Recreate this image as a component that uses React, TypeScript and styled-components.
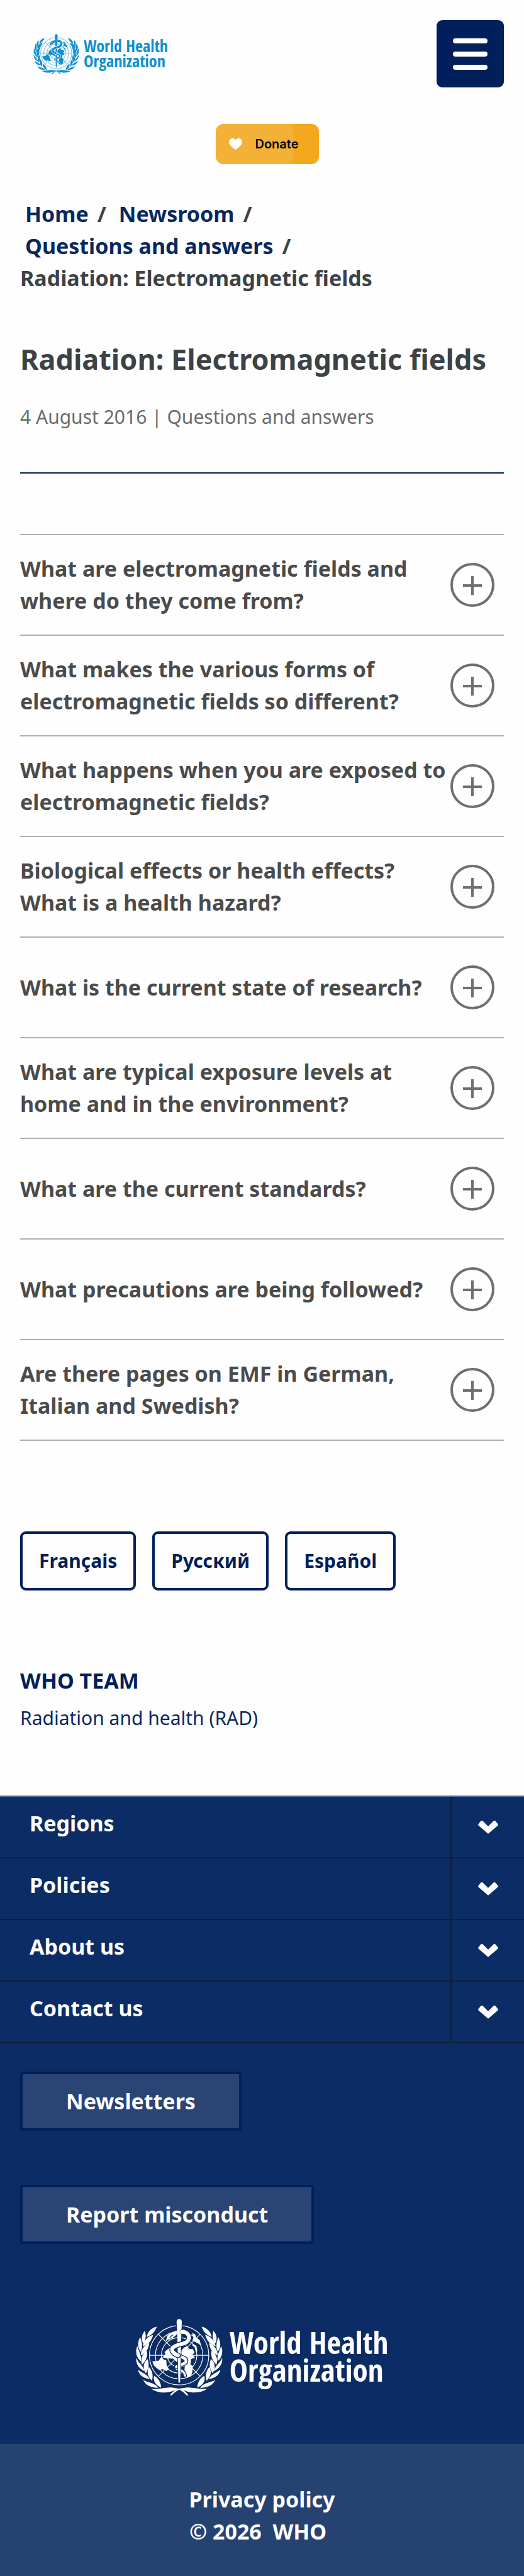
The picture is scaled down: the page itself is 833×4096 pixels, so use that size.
import React, { useState } from "react";
import styled, { createGlobalStyle, css } from "styled-components";

const navy = "#001f5b";
const deep = "#0c2c65";

const GlobalStyle = createGlobalStyle`
  *, *::before, *::after { box-sizing: border-box; }
  body {
    margin: 0;
    background: #fefefe;
    color: #3c4245;
    font-family: "Noto Sans", "Open Sans", sans-serif;
    font-size: 34px;
    line-height: 51px;
  }
  button { font: inherit; color: inherit; cursor: pointer; }
  a { color: inherit; text-decoration: none; }
`;

/* ---------- logo ---------- */

const LogoLink = styled.a<{ $large?: boolean }>`
  display: inline-flex;
  align-items: center;
  gap: ${(p) => (p.$large ? 11 : 7)}px;
  color: ${(p) => (p.$large ? "#fff" : "#0d90d1")};
  svg {
    width: ${(p) => (p.$large ? 138 : 73)}px;
    height: ${(p) => (p.$large ? 122 : 64)}px;
    flex: none;
  }
`;

const Wordmark = styled.span<{ $large?: boolean }>`
  font-family: "Open Sans Condensed", "Roboto Condensed", sans-serif;
  font-weight: 700;
  white-space: nowrap;
  ${(p) =>
    p.$large
      ? css`
          padding-bottom: 4px;
          font-size: 49px;
          line-height: 44px;
        `
      : css`
          padding-bottom: 2px;
          font-size: 26px;
          line-height: 24px;
        `}
  span {
    display: block;
  }
`;

const leaves = [
  "M158 75C126 82 98 104 90 144C124 132 146 112 158 75Z",
  "M79 102C54 130 52 160 68 190C86 162 86 130 79 102Z",
  "M134 130C100 140 70 165 64 207C96 198 122 175 134 130Z",
  "M46 145C28 180 28 212 50 244C66 208 58 175 46 145Z",
  "M108 183C76 200 48 228 51 268C86 250 102 226 108 183Z",
  "M27 205C12 245 20 278 51 308C57 268 38 240 27 205Z",
  "M92 236C64 255 46 288 58 330C86 306 98 272 92 236Z",
  "M20 284C17 325 35 354 76 374C68 338 36 322 20 284Z",
  "M96 292C70 312 60 347 84 388C106 354 108 325 96 292Z",
  "M32 364C40 402 66 418 110 428C94 392 60 387 32 364Z",
  "M105 345C90 375 94 407 125 438C137 402 127 370 105 345Z",
  "M66 433C84 470 120 486 168 485C142 450 100 452 66 433Z",
  "M140 404C131 440 150 467 187 484C186 446 166 420 140 404Z",
  "M120 492C165 500 212 480 262 484C288 486 300 489 309 494C280 497 262 515 215 517C174 518 144 509 120 492Z",
  "M304 490C280 500 260 516 246 536L259 536C272 520 290 506 313 496Z",
];

const Emblem = ({ bg }: { bg: string }) => {
  const branch = leaves.map((d) => <path key={d} d={d} />);
  return (
    <svg viewBox="18 22 582 515" fill="currentColor" aria-hidden="true">
      <g>{branch}</g>
      <g transform="translate(617 0) scale(-1 1)">{branch}</g>
      <g fill="none" stroke="currentColor" strokeWidth="5">
        <circle cx="308" cy="267" r="199" />
        <circle cx="308" cy="267" r="159" />
        <circle cx="308" cy="267" r="119" />
        <circle cx="308" cy="267" r="79" />
        <path d="M108 267H508M169 126L449 408M449 126L169 408" />
      </g>
      <path d="M218 172L230 134L262 112L330 90L346 92L290 118L288 132L262 152L232 162Z" />
      <path d="M394 118L414 124L424 148L446 166L455 200L432 186L412 176L398 170L404 146Z" />
      <path d="M402 190L424 205L430 238L420 248L414 214L396 200Z" />
      <path d="M322 236L342 214L366 208L372 228L400 224L412 250L398 262L414 284L388 292L384 330L400 340L396 384L386 408L352 418L342 388L346 340L360 318L350 290L322 276Z" />
      <path d="M196 282L216 258L210 246L232 226L252 214L262 240L276 262L304 292L292 312L268 290L236 288Z" />
      <path d="M128 308L170 304L188 278L206 296L222 300L224 334L240 362L222 372L196 360L174 366L152 348L138 334Z" />
      <g fill="none" strokeLinecap="round">
        <path d="M348 404C344 372 318 364 298 362C278 354 288 334 312 330" stroke={bg} strokeWidth="24" />
        <path d="M348 404C344 372 318 364 298 362C278 354 288 334 312 330" stroke="currentColor" strokeWidth="14" />
        <path d="M290 344C312 330 350 328 354 308C360 284 320 280 292 264" stroke={bg} strokeWidth="30" />
        <path d="M290 344C312 330 350 328 354 308C360 284 320 280 292 264" stroke="currentColor" strokeWidth="19" />
      </g>
      <path
        d="M291 44C289 18 328 18 326 44L321 180L315 446Q309 458 303 446L297 180Z"
        stroke={bg}
        strokeWidth="8"
        paintOrder="stroke"
      />
      <g fill="none" strokeLinecap="round">
        <path d="M330 110C366 110 384 142 368 168C350 198 296 186 266 216C250 236 272 256 300 268" stroke={bg} strokeWidth="36" />
        <path d="M326 110C366 108 384 142 368 168C350 198 296 186 266 216C250 236 272 256 300 268" stroke="currentColor" strokeWidth="25" />
        <path d="M240 150C252 128 272 120 290 116" stroke="currentColor" strokeWidth="22" />
        <path d="M246 148C256 136 262 132 266 131" stroke={bg} strokeWidth="5" />
      </g>
    </svg>
  );
};

const Logo = ({ large, bg }: { large?: boolean; bg: string }) => (
  <LogoLink href="#" $large={large} aria-label="World Health Organization">
    <Emblem bg={bg} />
    <Wordmark $large={large}>
      <span>World Health</span>
      <span>Organization</span>
    </Wordmark>
  </LogoLink>
);

/* ---------- header ---------- */

const Header = styled.header`
  display: flex;
  align-items: center;
  justify-content: space-between;
  padding: 32px 32px 0 53px;
`;

const MenuButton = styled.button`
  display: flex;
  flex-direction: column;
  align-items: center;
  justify-content: center;
  gap: 13px;
  width: 107px;
  height: 107px;
  padding: 0;
  border: 0;
  border-radius: 9px;
  background: ${navy};
  span {
    width: 55px;
    height: 8px;
    border-radius: 4px;
    background: #fff;
  }
`;

const DonateRow = styled.div`
  display: flex;
  justify-content: center;
  padding: 58px 0 54px 16px;
`;

const DonateLink = styled.a`
  display: flex;
  align-items: center;
  gap: 21px;
  width: 164px;
  height: 64px;
  padding-left: 21px;
  border-radius: 12px;
  background: radial-gradient(circle at -140px 32px, #f3b138 263px, #f3a81d 264px);
  color: #000;
  font-family: Inter, sans-serif;
  font-size: 20px;
  font-weight: 600;
  line-height: 28px;
`;

/* ---------- main ---------- */

const Main = styled.main`
  padding: 0 32px 101px;
`;

const Crumbs = styled.ol`
  display: flex;
  flex-wrap: wrap;
  column-gap: 12px;
  margin: 0;
  padding: 0;
  list-style: none;
  font-weight: 700;
`;

const Crumb = styled.li`
  white-space: nowrap;
  a {
    padding: 0 14px 0 8px;
    color: #08285f;
  }
`;

const Title = styled.h1`
  margin: 73px 0 40px;
  font-size: 45px;
  line-height: 60px;
  font-weight: 700;
`;

const Meta = styled.p`
  margin: 0;
  padding-bottom: 66px;
  border-bottom: 2px solid ${navy};
  color: #6b6b6b;
  font-size: 30px;
  line-height: 44px;
`;

const Questions = styled.section`
  margin-top: 96px;
  border-top: 2px solid #b0b0b0;
`;

const Question = styled.button`
  display: flex;
  align-items: center;
  justify-content: space-between;
  width: 100%;
  min-height: 160px;
  padding: 0 15px 0 0;
  border: 0;
  border-bottom: 2px solid #b0b0b0;
  background: none;
  color: #4b4b4b;
  font-weight: 700;
  text-align: left;
  span {
    flex: 1;
  }
  svg {
    flex: none;
    width: 70px;
    height: 70px;
  }
`;

const Languages = styled.nav`
  display: flex;
  flex-wrap: wrap;
  gap: 26px;
  margin-top: 144px;
`;

const Language = styled.a`
  padding: 21px 26px;
  border: 4px solid ${navy};
  border-radius: 9px;
  color: ${navy};
  font-size: 30px;
  line-height: 44px;
  font-weight: 700;
`;

const TeamTitle = styled.h2`
  margin: 118px 0 12px;
  color: ${navy};
  font-size: 34px;
  line-height: 51px;
  font-weight: 700;
`;

const TeamLink = styled.a`
  display: block;
  color: #08285f;
  font-size: 30px;
  line-height: 44px;
`;

/* ---------- footer ---------- */

const Footer = styled.footer`
  border-top: 2px solid #526f9a;
  background: ${deep};
  color: #fff;
  font-weight: 700;
`;

const FooterRow = styled.div`
  display: flex;
  height: 98px;
  border-bottom: 2px solid #101f33;
  a {
    flex: 1;
    padding: 17px 0 0 47px;
  }
`;

const Expand = styled.button`
  display: flex;
  align-items: center;
  justify-content: center;
  width: 117px;
  padding: 0;
  border: 0;
  border-left: 2px solid #101f33;
  background: none;
`;

const Actions = styled.div`
  display: flex;
  flex-direction: column;
  align-items: flex-start;
  gap: 86px;
  padding: 45px 32px 119px;
`;

const Action = styled.a`
  padding: 18px 69px 17px;
  border: 4px solid ${navy};
  border-radius: 4px;
  background: #2a4476;
`;

const FooterLogo = styled.div`
  display: flex;
  justify-content: center;
  padding-bottom: 77px;
`;

const Legal = styled.div`
  display: flex;
  flex-direction: column;
  align-items: center;
  padding: 63px 0 45px;
  background: #264271;
  small {
    padding-right: 4px;
    font-size: inherit;
    white-space: pre;
  }
`;

const questions = [
  "What are electromagnetic fields and where do they come from?",
  "What makes the various forms of electromagnetic fields so different?",
  "What happens when you are exposed to electromagnetic fields?",
  "Biological effects or health effects? What is a health hazard?",
  "What is the current state of research?",
  "What are typical exposure levels at home and in the environment?",
  "What are the current standards?",
  "What precautions are being followed?",
  "Are there pages on EMF in German, Italian and Swedish?",
];

const trail = ["Home", "Newsroom", "Questions and answers"];
const languages = ["Français", "Русский", "Español"];
const sections = ["Regions", "Policies", "About us", "Contact us"];

export default function App() {
  const [open, setOpen] = useState<string | null>(null);
  const toggle = (id: string) => setOpen(open === id ? null : id);

  return (
    <>
      <GlobalStyle />
      <Header>
        <Logo bg="#fefefe" />
        <MenuButton type="button" aria-label="Menu">
          <span />
          <span />
          <span />
        </MenuButton>
      </Header>
      <DonateRow>
        <DonateLink href="#">
          <svg width="21" height="18" viewBox="0 0 30 26" fill="#fff" aria-hidden="true">
            <path d="M15 26C6 20 0 15 0 8C0 3 4 0 8 0C11 0 14 2 15 4C16 2 19 0 22 0C26 0 30 3 30 8C30 15 24 20 15 26Z" />
          </svg>
          Donate
        </DonateLink>
      </DonateRow>

      <Main>
        <nav aria-label="Breadcrumb">
          <Crumbs>
            {trail.map((t) => (
              <Crumb key={t}>
                <a href="#">{t}</a>/
              </Crumb>
            ))}
            <Crumb aria-current="page">Radiation: Electromagnetic fields</Crumb>
          </Crumbs>
        </nav>
        <Title>Radiation: Electromagnetic fields</Title>
        <Meta>4 August 2016 | Questions and answers</Meta>

        <Questions>
          {questions.map((q) => (
            <Question key={q} type="button" aria-expanded={open === q} onClick={() => toggle(q)}>
              <span>{q}</span>
              <svg viewBox="0 0 70 70" fill="none" stroke="#6f6f6f" strokeWidth="4" aria-hidden="true">
                <circle cx="35" cy="35" r="33" />
                <path d={open === q ? "M20 36H50" : "M20 36H50M35 21V51"} />
              </svg>
            </Question>
          ))}
        </Questions>

        <Languages aria-label="Languages">
          {languages.map((l) => (
            <Language key={l} href="#">
              {l}
            </Language>
          ))}
        </Languages>

        <TeamTitle>WHO TEAM</TeamTitle>
        <TeamLink href="#">Radiation and health (RAD)</TeamLink>
      </Main>

      <Footer>
        {sections.map((s) => (
          <FooterRow key={s}>
            <a href="#">{s}</a>
            <Expand type="button" aria-label={`Expand ${s}`} aria-expanded={open === s} onClick={() => toggle(s)}>
              <svg width="34" height="22" viewBox="0 0 34 22" fill="#fff" aria-hidden="true">
                <path d="M1 7L5 2Q7 0 9 2L17 10L25 2Q27 0 29 2L33 7Q33 8 32 9L18 21Q17 22 16 21L2 9Q1 8 1 7Z" />
              </svg>
            </Expand>
          </FooterRow>
        ))}
        <Actions>
          <Action href="#">Newsletters</Action>
          <Action href="#">Report misconduct</Action>
        </Actions>
        <FooterLogo>
          <Logo large bg={deep} />
        </FooterLogo>
        <Legal>
          <a href="#">Privacy policy</a>
          <small>{"© 2026\u00a0 WHO\u00a0"}</small>
        </Legal>
      </Footer>
    </>
  );
}
